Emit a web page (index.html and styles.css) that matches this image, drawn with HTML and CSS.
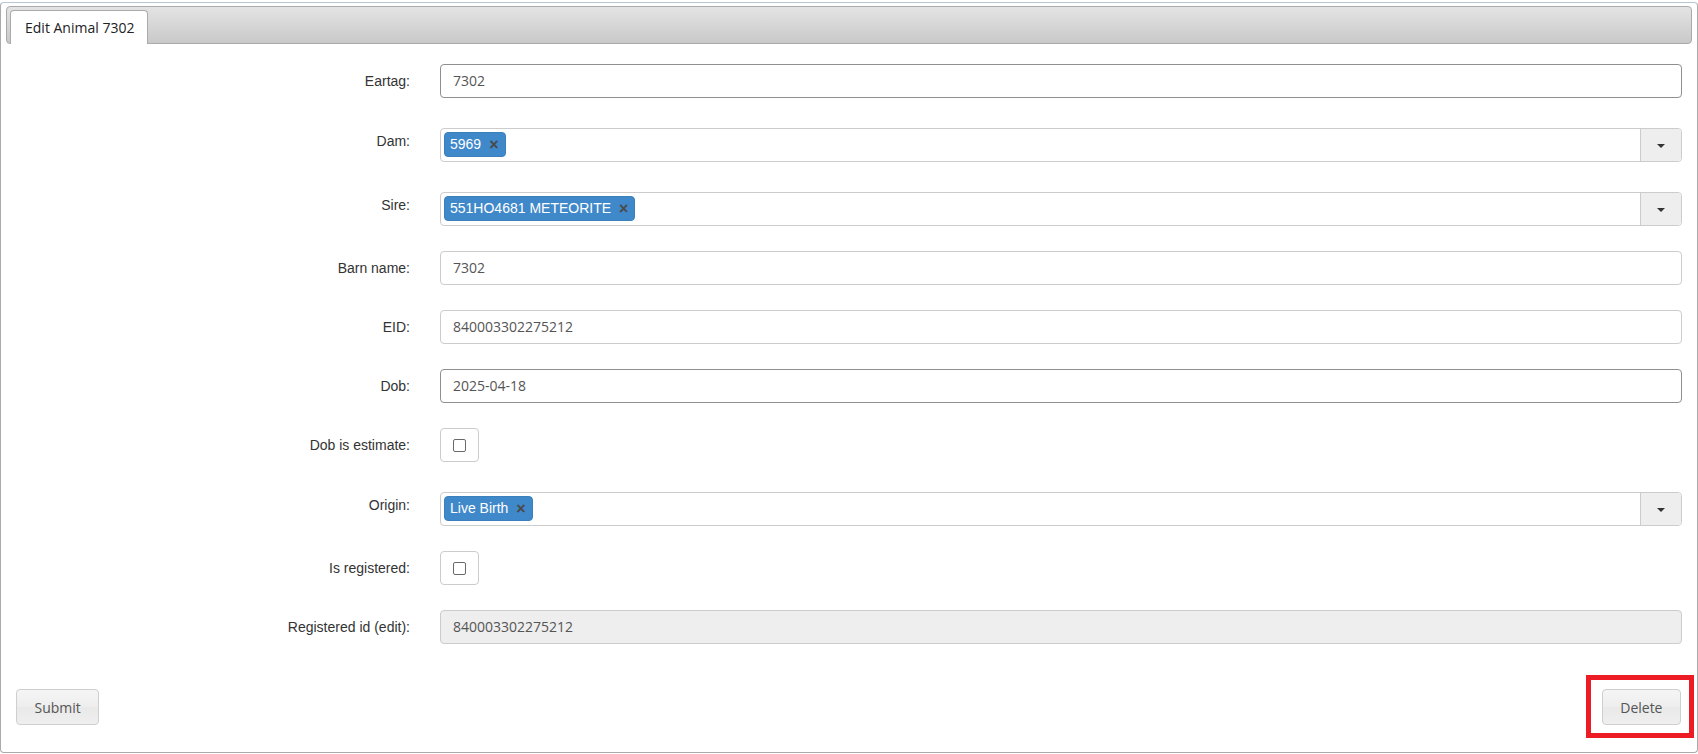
FILE: index.html
```html
<!DOCTYPE html>
<html>
<head>
<meta charset="utf-8">
<title>Edit Animal 7302</title>
<link rel="stylesheet" href="styles.css">
</head>
<body>
<div class="widget">
  <div class="tabbar">
    <div class="tab">Edit Animal 7302</div>
  </div>
  <form class="form">
    <div class="row">
      <label class="label">Eartag:</label>
      <div class="ctrl"><div class="input strong">7302</div></div>
    </div>
    <div class="row s2row">
      <label class="label">Dam:</label>
      <div class="ctrl">
        <div class="select2">
          <div class="chips"><span class="chip">5969<span class="x">×</span></span></div>
          <div class="arrow"><span class="caret"></span></div>
        </div>
      </div>
    </div>
    <div class="row s2row">
      <label class="label">Sire:</label>
      <div class="ctrl">
        <div class="select2">
          <div class="chips"><span class="chip">551HO4681 METEORITE<span class="x">×</span></span></div>
          <div class="arrow"><span class="caret"></span></div>
        </div>
      </div>
    </div>
    <div class="row">
      <label class="label">Barn name:</label>
      <div class="ctrl"><div class="input">7302</div></div>
    </div>
    <div class="row">
      <label class="label">EID:</label>
      <div class="ctrl"><div class="input">840003302275212</div></div>
    </div>
    <div class="row">
      <label class="label">Dob:</label>
      <div class="ctrl"><div class="input strong">2025-04-18</div></div>
    </div>
    <div class="row">
      <label class="label">Dob is estimate:</label>
      <div class="ctrl"><div class="checkwrap"><span class="check"></span></div></div>
    </div>
    <div class="row s2row">
      <label class="label">Origin:</label>
      <div class="ctrl">
        <div class="select2">
          <div class="chips"><span class="chip">Live Birth<span class="x">×</span></span></div>
          <div class="arrow"><span class="caret"></span></div>
        </div>
      </div>
    </div>
    <div class="row">
      <label class="label">Is registered:</label>
      <div class="ctrl"><div class="checkwrap"><span class="check"></span></div></div>
    </div>
    <div class="row">
      <label class="label">Registered id (edit):</label>
      <div class="ctrl"><div class="input disabled">840003302275212</div></div>
    </div>
    <div class="actions">
      <button type="button" class="btn">Submit</button>
      <span class="delwrap">
        <button type="button" class="btn">Delete</button>
        <span class="highlight"></span>
      </span>
    </div>
  </form>
</div>
</body>
</html>
```

FILE: styles.css
```css
html, body {
  margin: 0;
  padding: 0;
  background: #fff;
}

body {
  font-family: "Liberation Sans", Arial, sans-serif;
  font-size: 14px;
  color: #333;
}

.widget {
  box-sizing: border-box;
  margin-top: 2px;
  height: 751px;
  border: 1px solid #aaa;
  border-top-color: #b9c6d3;
  border-radius: 4px;
  padding: 3px 5px 0 5px;
}

.tabbar {
  box-sizing: border-box;
  height: 38px;
  border: 1px solid #aaa;
  border-radius: 4px;
  background: linear-gradient(to bottom, #e4e4e4 0%, #d6d6d6 50%, #c9c9c9 100%);
  padding: 4px 3px 0 3px;
  display: flex;
  align-items: flex-end;
}

.tab {
  box-sizing: border-box;
  height: 34px;
  margin-bottom: -1px;
  background: #fff;
  border: 1px solid #aaa;
  border-bottom: 0;
  border-radius: 4px 4px 0 0;
  padding: 7px 13px 0 14px;
  font-family: "Open Sans", sans-serif;
  font-size: 14px;
  line-height: 20px;
  color: #222;
}

.form {
  padding-top: 20px;
}

.row {
  display: flex;
  align-items: flex-start;
  margin-bottom: 25px;
}

.label {
  width: 404px;
  flex: none;
  text-align: right;
  padding-top: 7px;
  line-height: 20px;
  font-size: 14px;
  color: #333;
}

.ctrl {
  flex: 1;
  margin-left: 30px;
  margin-right: 10px;
}

.s2row .ctrl {
  padding-top: 5px;
}

.s2row .label {
  padding-top: 8px;
}

.input {
  box-sizing: border-box;
  height: 34px;
  border: 1px solid #ccc;
  border-radius: 4px;
  padding: 0 12px;
  font-family: "Open Sans", sans-serif;
  font-size: 14px;
  line-height: 32px;
  color: #555;
  background: #fff;
}

.input.strong {
  border-color: #8f8f8f;
}

.input.disabled {
  background: #eee;
}

.select2 {
  box-sizing: border-box;
  height: 34px;
  border: 1px solid #ccc;
  border-radius: 4px;
  display: flex;
  background: #fff;
}

.chips {
  flex: 1;
  padding: 3px 3px;
}

.chip {
  display: inline-flex;
  align-items: center;
  box-sizing: border-box;
  height: 25px;
  background: #3f88c9;
  border: 1px solid #3a80bd;
  border-radius: 4px;
  color: #fff;
  padding: 0 6px 0 5px;
  font-family: "Liberation Sans", Arial, sans-serif;
  font-size: 14px;
  line-height: 23px;
}

.x {
  margin-left: 8px;
  color: #4a4a4a;
  font-weight: bold;
  font-size: 16px;
}

.arrow {
  width: 40px;
  flex: none;
  border-left: 1px solid #ccc;
  background: #eee;
  border-radius: 0 3px 3px 0;
  display: flex;
  align-items: center;
  justify-content: center;
}

.caret {
  width: 0;
  height: 0;
  border-left: 4px solid transparent;
  border-right: 4px solid transparent;
  border-top: 4px solid #333;
  margin-top: 1px;
}

.checkwrap {
  box-sizing: border-box;
  width: 39px;
  height: 34px;
  border: 1px solid #ccc;
  border-radius: 4px;
  display: flex;
  align-items: center;
  justify-content: center;
}

.check {
  box-sizing: border-box;
  width: 13px;
  height: 13px;
  border: 1px solid #6a6a6a;
  border-radius: 2px;
  background: #fff;
}

.actions {
  display: flex;
  justify-content: space-between;
  padding: 20px 11px 0 10px;
}

.btn {
  box-sizing: border-box;
  height: 36px;
  padding: 0 17.5px;
  border: 1px solid #cfcfcf;
  border-radius: 4px;
  background: linear-gradient(to bottom, #f5f5f5 0%, #eeeeee 48%, #e9e9e9 52%, #efefef 100%);
  font-family: "Open Sans", sans-serif;
  font-size: 14px;
  color: #555;
  cursor: pointer;
}

.delwrap {
  position: relative;
  display: inline-block;
}

.delwrap .btn {
  display: block;
}

.highlight {
  position: absolute;
  top: -14px;
  bottom: -13px;
  left: -16px;
  right: -13px;
  border: 5px solid #ed1c24;
  pointer-events: none;
}
```
